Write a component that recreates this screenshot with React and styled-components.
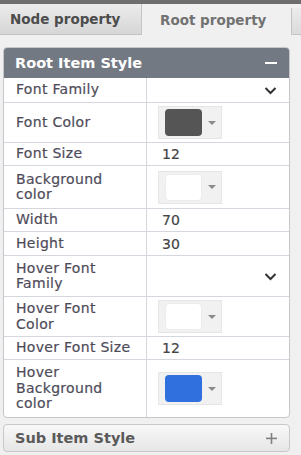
import React from 'react';
import styled, { createGlobalStyle } from 'styled-components';

const GlobalStyle = createGlobalStyle`
    html, body {
        margin: 0;
        padding: 0;
        background: #f0f0f0;
    }
    body {
        font-family: "DejaVu Sans", Verdana, sans-serif;
    }
`

const Page = styled.div`
    width: 301px;
    height: 455px;
    overflow: hidden;
    background: #f0f0f0;
    border-top: 4px solid #6e6e6e;
    box-sizing: border-box;
`
const TabBar = styled.div`
    display: grid;
    grid-template-columns: 142px 149px 1fr;
    height: 31px;
    align-items: stretch;
`
const Tab = styled.div`
    display: flex;
    align-items: center;
    padding-left: ${props => props.pad || 10}px;
    font-size: 13.5px;
    font-weight: 700;
    color: ${props => props.active ? '#727272' : '#4c4c4c'};
    background: ${props => props.active ? '#f0f0f0' : 'linear-gradient(#ececec, #d6d6d6)'};
    border-bottom: ${props => props.active ? 'none' : '1px solid #c4c4c4'};
    border-right: ${props => props.active ? 'none' : '1px solid #c4c4c4'};
    box-sizing: border-box;
`
const StubTab = styled(Tab)`
    margin-top: 4px;
    border-left: 1px solid #c4c4c4;
    border-right: none;
    background: linear-gradient(#ececec, #dadada);
`
const Body = styled.div`
    padding: 12px 11px 0 3px;
    display: flex;
    flex-direction: column;
    gap: 6px;
`
const Panel = styled.div`
    border: 1px solid #c6c6cc;
    border-radius: 4px;
    overflow: hidden;
    background: #fff;
`
const PanelHeader = styled.div`
    height: 30px;
    display: flex;
    align-items: center;
    justify-content: space-between;
    padding: 0 12px 0 11px;
    background: #737983;
    color: #fff;
    font-size: 14.5px;
    font-weight: 700;
`
const Table = styled.div`
    display: grid;
    grid-template-columns: 143px 1fr;
`
const Label = styled.div`
    min-height: ${props => props.h}px;
    box-sizing: border-box;
    display: flex;
    align-items: center;
    padding: 2px 10px 2px 12px;
    font-size: 14px;
    line-height: 15.5px;
    letter-spacing: 0.3px;
    color: #4f4c5a;
    -webkit-text-stroke: 0.2px #4f4c5a;
    border-right: 1px solid #d6d6de;
    border-bottom: ${props => props.last ? 'none' : '1px solid #d6d6de'};
`
const Value = styled.div`
    box-sizing: border-box;
    display: flex;
    align-items: center;
    justify-content: space-between;
    padding: 0 12px 0 15px;
    font-size: 14px;
    color: #444;
    -webkit-text-stroke: 0.2px #444;
    border-bottom: ${props => props.last ? 'none' : '1px solid #d6d6de'};
`
const Picker = styled.div`
    width: 64px;
    height: 33px;
    box-sizing: border-box;
    margin-left: -4px;
    padding: 3px 0 3px 6px;
    display: flex;
    align-items: center;
    gap: 6px;
    background: #f1f1f1;
    border: 1px solid #e6e6e6;
`
const Swatch = styled.div`
    width: 37px;
    height: 27px;
    border-radius: 4px;
    background: ${props => props.color};
    border: ${props => props.color === '#ffffff' ? '1px solid #ececec' : 'none'};
    box-sizing: border-box;
`
const Caret = styled.span`
    width: 0;
    height: 0;
    border-left: 4px solid transparent;
    border-right: 4px solid transparent;
    border-top: 4px solid #8a8a8a;
`
const Collapsed = styled.div`
    height: 28px;
    box-sizing: border-box;
    display: flex;
    align-items: center;
    justify-content: space-between;
    padding: 0 12px 0 11px;
    border: 1px solid #c8c8c8;
    border-radius: 4px;
    background: linear-gradient(#f8f8f8, #e6e6e6);
    color: #5a5a5a;
    font-size: 14.5px;
    font-weight: 700;
`

const Chevron = () => (
    <svg width="13" height="9" viewBox="0 0 13 9">
        <path d="M1.5 2 L6.5 7 L11.5 2" fill="none" stroke="#333" strokeWidth="2" />
    </svg>
)
const Minus = () => (
    <svg width="12" height="12" viewBox="0 0 12 12">
        <rect x="0" y="5" width="12" height="2" fill="#fff" />
    </svg>
)
const Plus = () => (
    <svg width="11" height="11" viewBox="0 0 11 11">
        <rect x="0" y="4.6" width="11" height="1.6" fill="#808080" />
        <rect x="4.7" y="0" width="1.6" height="11" fill="#808080" />
    </svg>
)

const rows = [
    { label: 'Font Family', h: 25, type: 'select' },
    { label: 'Font Color', h: 40, type: 'color', color: '#555555' },
    { label: 'Font Size', h: 23, type: 'text', value: '12' },
    { label: 'Background color', h: 43, type: 'color', color: '#ffffff' },
    { label: 'Width', h: 23, type: 'text', value: '70' },
    { label: 'Height', h: 24, type: 'text', value: '30' },
    { label: 'Hover Font Family', h: 41, type: 'select' },
    { label: 'Hover Font Color', h: 40, type: 'color', color: '#ffffff' },
    { label: 'Hover Font Size', h: 23, type: 'text', value: '12' },
    { label: 'Hover Background color', h: 57, type: 'color', color: '#2f6fde' },
]

const App = () => (
    <>
        <GlobalStyle />
        <Page>
            <TabBar>
                <Tab>Node property</Tab>
                <Tab active pad={18}>Root property</Tab>
                <StubTab />
            </TabBar>
            <Body>
                <Panel>
                    <PanelHeader>
                        <span>Root Item Style</span>
                        <Minus />
                    </PanelHeader>
                    <Table>
                        {rows.map((r, i) => {
                            const last = i === rows.length - 1;
                            return (
                                <React.Fragment key={r.label}>
                                    <Label h={r.h} last={last}>{r.label}</Label>
                                    <Value last={last}>
                                        {r.type === 'text' && <span>{r.value}</span>}
                                        {r.type === 'select' && <><span /><Chevron /></>}
                                        {r.type === 'color' && (
                                            <Picker>
                                                <Swatch color={r.color} />
                                                <Caret />
                                            </Picker>
                                        )}
                                    </Value>
                                </React.Fragment>
                            );
                        })}
                    </Table>
                </Panel>
                <Collapsed>
                    <span>Sub Item Style</span>
                    <Plus />
                </Collapsed>
            </Body>
        </Page>
    </>
)

export default App;
